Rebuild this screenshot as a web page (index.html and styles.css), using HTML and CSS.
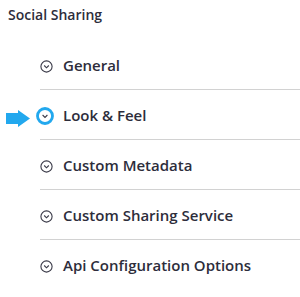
FILE: index.html
```html
<!DOCTYPE html>
<html>
<head>
    <title>Social Sharing</title>
    <link rel="stylesheet" href="styles.css">
</head>
<body>
    <h3 class="panel-title">Social Sharing</h3>
    <ul class="section-list">
        <li class="section-item">
            <svg class="toggle" width="13" height="13" viewBox="0 0 13 13"><circle cx="6.5" cy="6.5" r="5.6" fill="none" stroke="#3a3a48" stroke-width="1.1"/><path d="M4.2 5.5 L6.5 7.8 L8.8 5.5" fill="none" stroke="#3a3a48" stroke-width="1.1"/></svg>
            <span>General</span>
        </li>
        <li class="section-item active">
            <svg class="pointer" width="24" height="17" viewBox="0 0 24 17"><path d="M0 3 H12 V0 L24 8.5 L12 17 V14 H0 Z" fill="#22a8ee"/></svg>
            <svg class="toggle" width="18" height="18" viewBox="0 0 18 18"><circle cx="9" cy="9" r="7.5" fill="#fff" stroke="#22a8ee" stroke-width="2.8"/><path d="M6.6 8 L9 10.4 L11.4 8" fill="none" stroke="#3a3a48" stroke-width="1.1"/></svg>
            <span>Look &amp; Feel</span>
        </li>
        <li class="section-item">
            <svg class="toggle" width="13" height="13" viewBox="0 0 13 13"><circle cx="6.5" cy="6.5" r="5.6" fill="none" stroke="#3a3a48" stroke-width="1.1"/><path d="M4.2 5.5 L6.5 7.8 L8.8 5.5" fill="none" stroke="#3a3a48" stroke-width="1.1"/></svg>
            <span>Custom Metadata</span>
        </li>
        <li class="section-item">
            <svg class="toggle" width="13" height="13" viewBox="0 0 13 13"><circle cx="6.5" cy="6.5" r="5.6" fill="none" stroke="#3a3a48" stroke-width="1.1"/><path d="M4.2 5.5 L6.5 7.8 L8.8 5.5" fill="none" stroke="#3a3a48" stroke-width="1.1"/></svg>
            <span>Custom Sharing Service</span>
        </li>
        <li class="section-item">
            <svg class="toggle" width="13" height="13" viewBox="0 0 13 13"><circle cx="6.5" cy="6.5" r="5.6" fill="none" stroke="#3a3a48" stroke-width="1.1"/><path d="M4.2 5.5 L6.5 7.8 L8.8 5.5" fill="none" stroke="#3a3a48" stroke-width="1.1"/></svg>
            <span>Api Configuration Options</span>
        </li>
    </ul>
</body>
</html>
```

FILE: styles.css
```css
body {
    margin: 0;
    background: #fff;
    font-family: "Open Sans", "Liberation Sans", sans-serif;
    color: #2d2d3b;
}

.panel-title {
    margin: 0;
    padding: 5px 0 0 8px;
    font-size: 14px;
    font-weight: 600;
    line-height: 20px;
}

.section-list {
    list-style: none;
    margin: 15px 0 0 40px;
    padding: 0;
}

.section-item {
    position: relative;
    display: flex;
    align-items: center;
    gap: 10px;
    height: 49px;
    border-bottom: 1px solid #d2d2d2;
    font-size: 15px;
    font-weight: 600;
}

.section-item:last-child {
    border-bottom: none;
}

.section-item .toggle {
    flex: none;
    margin-top: 3px;
}

.section-item.active .toggle {
    margin-left: -4px;
    margin-right: -1px;
}

.pointer {
    position: absolute;
    left: -34px;
    top: 20px;
}
```
